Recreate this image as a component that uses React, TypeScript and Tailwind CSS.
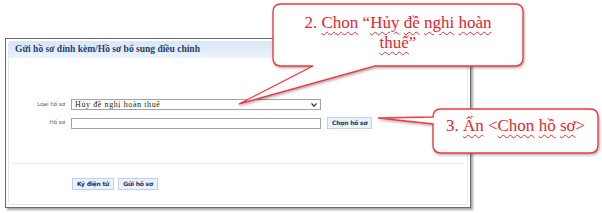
import React from 'react';

const squiggle = 'underline decoration-wavy decoration-[#e0302f] decoration-[1px] underline-offset-[3px]';

function Btn({ label }: { label: string }) {
  return (
    <div className="h-[12px] px-[4px] flex items-center bg-[#eaf2fc] border border-[#b9d3ee] text-[6px] font-bold text-[#1e3560] font-['DejaVu_Sans',sans-serif] leading-none tracking-[-0.2px]">
      {label}
    </div>
  );
}

function FormWindow() {
  return (
    <div className="w-[466px] h-[170px] border border-[#6a6a6a] shadow-[2px_2px_2px_rgba(0,0,0,0.35)] bg-white p-[2px]">
      <div className="h-full border border-[#dfe7f0] rounded-[3px] flex flex-col">
        <div className="h-[16px] bg-gradient-to-b from-[#d9e6f6] to-[#edf3fb] pl-[6px] flex items-center">
          <span className="text-[9.5px] font-bold text-[#23406f] font-['Liberation_Serif',serif] leading-none">
            Gửi hồ sơ đính kèm/Hồ sơ bổ sung điều chỉnh
          </span>
        </div>

        <div className="flex flex-col gap-[7px] pt-[41px] font-['DejaVu_Sans',sans-serif]">
          <div className="flex items-center">
            <div className="w-[56px] text-right text-[5.5px] text-[#555] leading-none">Loại hồ sơ</div>
            <div className="ml-[6px] w-[250px] h-[11px] border border-[#a3a3a3] flex items-center justify-between px-[3px]">
              <span className="text-[8px] text-[#222] font-['Liberation_Serif',serif] leading-none tracking-[0.6px]">Hủy đề nghị hoàn thuế</span>
              <svg width="6" height="4" viewBox="0 0 6 4">
                <path d="M0.5 0.5 L3 3.2 L5.5 0.5" fill="none" stroke="#333" strokeWidth="1.2" />
              </svg>
            </div>
          </div>
          <div className="flex items-center">
            <div className="w-[56px] text-right text-[5.5px] text-[#555] leading-none">Hồ sơ</div>
            <div className="ml-[6px] w-[250px] h-[11px] border border-[#a3a3a3]" />
            <div className="ml-[6px]">
              <Btn label="Chọn hồ sơ" />
            </div>
          </div>
        </div>

        <div className="mt-[34px] mx-[3px] h-[1px] bg-[#e6ecf3]" />

        <div className="flex gap-[4px] pl-[63px] pt-[14px]">
          <Btn label="Ký điện tử" />
          <Btn label="Gửi hồ sơ" />
        </div>
      </div>
    </div>
  );
}

function Callouts() {
  return (
    <>
      <svg className="absolute inset-0" width="602" height="213" viewBox="0 0 602 213">
        <defs>
          <filter id="sh" x="-10%" y="-10%" width="120%" height="130%">
            <feDropShadow dx="1" dy="1.5" stdDeviation="1" floodColor="#000" floodOpacity="0.3" />
          </filter>
        </defs>
        <path
          d="M281 4 H515 Q523 4 523 12 V58 Q523 66 515 66 H375 L239 104 L313 66 H281 Q273 66 273 58 V12 Q273 4 281 4 Z"
          fill="#fff"
          stroke="#ec3a44"
          strokeWidth="1.4"
          filter="url(#sh)"
        />
        <path
          d="M441 109 H590 Q598 109 598 117 V145 Q598 153 590 153 H441 Q433 153 433 145 V124 L378 118 L433 117 Q433 109 441 109 Z"
          fill="#fff"
          stroke="#ec3a44"
          strokeWidth="1.4"
          filter="url(#sh)"
        />
      </svg>
      <div className="absolute left-[273px] top-[13px] w-[250px] text-center text-[17px] leading-[20px] text-[#e3262d] font-['Liberation_Serif',serif]">
        2. <span className={squiggle}>Chon</span> “<span className={squiggle}>Hủy</span> <span className={squiggle}>đề</span>{' '}
        <span className={squiggle}>nghi</span> <span className={squiggle}>hoàn</span>
        <br />
        <span className={squiggle}>thuế</span>”
      </div>
      <div className="absolute left-[433px] top-[116px] w-[165px] text-center text-[17px] leading-[20px] text-[#e3262d] font-['Liberation_Serif',serif]">
        3. <span className={squiggle}>Ấn</span> &lt;<span className={squiggle}>Chon</span> <span className={squiggle}>hồ</span>{' '}
        <span className={squiggle}>sơ</span>&gt;
      </div>
    </>
  );
}

export default function App() {
  return (
    <div className="relative w-[602px] h-[213px] bg-white overflow-hidden">
      <div className="pt-[38px] pl-[5px]">
        <FormWindow />
      </div>
      <Callouts />
    </div>
  );
}
